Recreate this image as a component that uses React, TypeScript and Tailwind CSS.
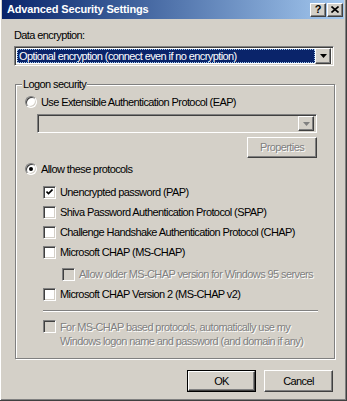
import { ReactNode } from "react";

const raised =
  "border border-t-white border-l-white border-r-[#404040] border-b-[#404040] shadow-[inset_-1px_-1px_0_#808080,inset_1px_1px_0_#d4d0c8]";
const sunken =
  "border border-t-[#808080] border-l-[#808080] border-r-white border-b-white shadow-[inset_1px_1px_0_#404040,inset_-1px_-1px_0_#d4d0c8]";
const dim = "text-[#808080] [text-shadow:1px_1px_0_#fff]";

const Arrow = ({ color = "#000" }: { color?: string }) => (
  <svg width="7" height="4" viewBox="0 0 7 4">
    <path d="M0 0h7L3.5 4z" fill={color} />
  </svg>
);

const Radio = ({ checked, label }: { checked?: boolean; label: string }) => (
  <div className="flex items-center h-[16px]">
    <div
      className={`w-[12px] h-[12px] rounded-full bg-white flex items-center justify-center ${sunken}`}
    >
      {checked && <div className="w-[4px] h-[4px] rounded-full bg-black" />}
    </div>
    <span className="ml-[4px]">{label}</span>
  </div>
);

const Check = ({
  checked,
  disabled,
  children,
}: {
  checked?: boolean;
  disabled?: boolean;
  children: ReactNode;
}) => (
  <div className="flex items-start">
    <div
      className={`w-[13px] h-[13px] shrink-0 flex items-center justify-center ${sunken} ${
        disabled ? "bg-[#d4d0c8]" : "bg-white"
      }`}
    >
      {checked && (
        <svg width="7" height="7" viewBox="0 0 7 7">
          <path d="M0.5 2.5l2 2 4-4" stroke="#000" strokeWidth="1.6" fill="none" />
        </svg>
      )}
    </div>
    <span className={`ml-[4px] ${disabled ? dim : ""}`}>{children}</span>
  </div>
);

const CheckRow = (props: {
  checked?: boolean;
  disabled?: boolean;
  children: ReactNode;
  indent?: boolean;
}) => (
  <div className={`h-[20px] flex items-center ${props.indent ? "ml-[37px]" : "ml-[18px]"}`}>
    <Check checked={props.checked} disabled={props.disabled}>
      {props.children}
    </Check>
  </div>
);

export default function App() {
  return (
    <div
      className="w-[347px] h-[401px] bg-[#d4d0c8] flex flex-col text-[11px] leading-[13px] text-black tracking-[-0.6px] border-r border-b border-r-[#404040] border-b-[#404040] shadow-[inset_1px_0_0_#fff,inset_-1px_-1px_0_#808080]"
      style={{ fontFamily: '"Liberation Sans", Arial, sans-serif' }}
    >
      {/* title bar */}
      <div className="mx-[2px] h-[19px] shrink-0 flex items-center bg-gradient-to-r from-[#0a246a] to-[#a6caf0] pl-[5px] pr-[1px]">
        <span className="text-white font-bold tracking-[-0.15px] flex-1">Advanced Security Settings</span>
        <div className={`w-[16px] h-[14px] flex items-center justify-center bg-[#d4d0c8] ${raised}`}>
          <span className="font-bold text-[11px] leading-none tracking-normal">?</span>
        </div>
        <div className={`ml-[1px] w-[16px] h-[14px] flex items-center justify-center bg-[#d4d0c8] ${raised}`}>
          <svg width="8" height="7" viewBox="0 0 8 7">
            <path d="M0.5 0.5l7 6M7.5 0.5l-7 6" stroke="#000" strokeWidth="1.6" />
          </svg>
        </div>
      </div>

      <div className="pl-[14px] mt-[10px]">Data encryption:</div>

      <div className={`ml-[14px] mt-[4px] w-[320px] h-[20px] bg-white flex items-center p-[2px] ${sunken}`}>
        <div className="flex-1 h-full bg-[#0a246a] text-white flex items-center pl-[2px] outline-1 outline-dotted outline-offset-[-1px] outline-[#a6caf0]">
          Optional encryption (connect even if no encryption)
        </div>
        <div className={`w-[16px] h-[16px] bg-[#d4d0c8] flex items-center justify-center ${raised}`}>
          <Arrow />
        </div>
      </div>

      {/* group box */}
      <div className="relative ml-[15px] mt-[18px] w-[320px] h-[275px] border border-[#808080] shadow-[inset_1px_1px_0_#fff,1px_1px_0_#fff] pt-[9px] pl-[9px]">
        <span className="absolute left-[6px] top-[-7px] px-[1px] bg-[#d4d0c8]">Logon security</span>

        <Radio label="Use Extensible Authentication Protocol (EAP)" />

        <div className={`ml-[12px] mt-[4px] w-[280px] h-[19px] bg-[#d4d0c8] flex items-center justify-end p-[2px] ${sunken}`}>
          <div className={`w-[16px] h-[15px] bg-[#d4d0c8] flex items-center justify-center ${raised}`}>
            <Arrow color="#808080" />
          </div>
        </div>

        <div className="flex justify-end w-[292px] mt-[4px]">
          <div className={`w-[70px] h-[21px] flex items-center justify-center ${raised} ${dim}`}>
            Properties
          </div>
        </div>

        <div className="mt-[3px]">
          <Radio checked label="Allow these protocols" />
        </div>

        <div className="mt-[5px]">
          <CheckRow checked>Unencrypted password (PAP)</CheckRow>
          <CheckRow>Shiva Password Authentication Protocol (SPAP)</CheckRow>
          <CheckRow>Challenge Handshake Authentication Protocol (CHAP)</CheckRow>
          <CheckRow>Microsoft CHAP (MS-CHAP)</CheckRow>
          <div className="mt-[2px]">
            <CheckRow disabled indent>
              Allow older MS-CHAP version for Windows 95 servers
            </CheckRow>
          </div>
          <CheckRow>Microsoft CHAP Version 2 (MS-CHAP v2)</CheckRow>
        </div>

        <div className="ml-[18px] mt-[6px] w-[275px] border-t border-t-[#808080] border-b border-b-white" />

        <div className="ml-[18px] mt-[8px] leading-[14px]">
          <Check disabled>
            For MS-CHAP based protocols, automatically use my
            <br />
            Windows logon name and password (and domain if any)
          </Check>
        </div>
      </div>

      <div className="flex justify-end gap-[8px] mt-[11px] mr-[13px]">
        <div className="w-[69px] h-[22px] border border-black">
          <div className={`w-full h-full flex items-center justify-center ${raised}`}>OK</div>
        </div>
        <div className={`w-[69px] h-[22px] flex items-center justify-center ${raised}`}>Cancel</div>
      </div>
    </div>
  );
}
